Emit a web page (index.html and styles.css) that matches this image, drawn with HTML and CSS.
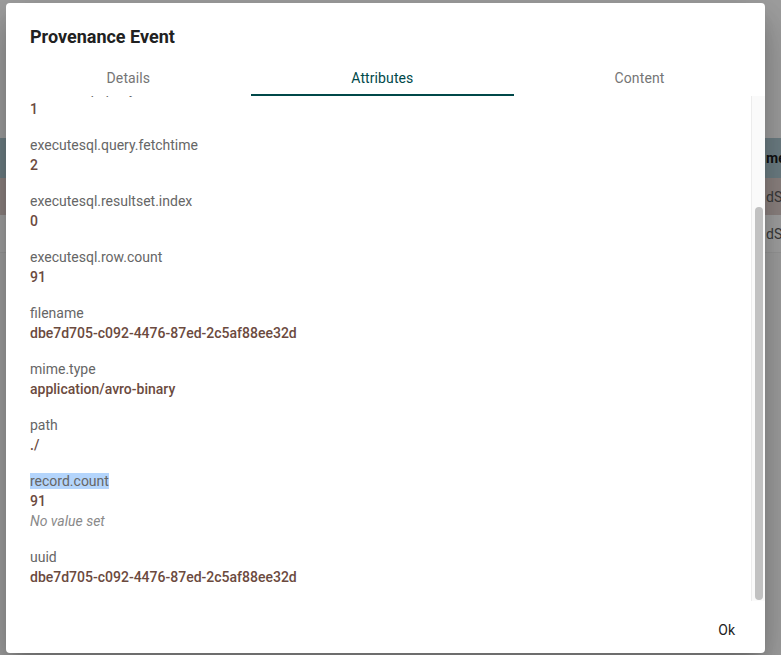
FILE: index.html
```
<!DOCTYPE html>
<html lang="en">
  <head>
    <meta charset="UTF-8" />
    <meta name="viewport" content="width=device-width, initial-scale=1.0" />
    <title>Provenance Event</title>
    <link rel="stylesheet" href="styles.css">
  </head>
  <body>
    <div class="page">
      <div class="table">
        <div class="table-row table-head"><span>mem</span></div>
        <div class="table-row table-selected"><span>dSq</span></div>
        <div class="table-row"><span>dSq</span></div>
      </div>
    </div>

    <div class="dialog">
      <h1 class="dialog-title">Provenance Event</h1>

      <div class="tabs">
        <div class="tab">Details</div>
        <div class="tab active">Attributes</div>
        <div class="tab">Content</div>
      </div>

      <div class="dialog-body">
        <div class="attr-viewport">
          <div class="attr-list">
            <div class="attr">
              <div class="attr-name">executesql.query.executiontime</div>
              <div class="attr-value">1</div>
            </div>
            <div class="attr">
              <div class="attr-name">executesql.query.fetchtime</div>
              <div class="attr-value">2</div>
            </div>
            <div class="attr">
              <div class="attr-name">executesql.resultset.index</div>
              <div class="attr-value">0</div>
            </div>
            <div class="attr">
              <div class="attr-name">executesql.row.count</div>
              <div class="attr-value">91</div>
            </div>
            <div class="attr">
              <div class="attr-name">filename</div>
              <div class="attr-value">dbe7d705-c092-4476-87ed-2c5af88ee32d</div>
            </div>
            <div class="attr">
              <div class="attr-name">mime.type</div>
              <div class="attr-value">application/avro-binary</div>
            </div>
            <div class="attr">
              <div class="attr-name">path</div>
              <div class="attr-value">./</div>
            </div>
            <div class="attr">
              <div class="attr-name"><span class="selected">record.count</span></div>
              <div class="attr-value">91</div>
              <div class="attr-empty">No value set</div>
            </div>
            <div class="attr">
              <div class="attr-name">uuid</div>
              <div class="attr-value">dbe7d705-c092-4476-87ed-2c5af88ee32d</div>
            </div>
          </div>
        </div>
        <div class="scrollbar">
          <div class="scroll-thumb"></div>
        </div>
      </div>

      <div class="dialog-actions">
        <button type="button" class="btn">Ok</button>
      </div>
    </div>
  </body>
</html>
```

FILE: styles.css
```
html,
body {
  margin: 0;
  height: 100%;
}

body {
  font-family: Roboto, "Liberation Sans", sans-serif;
  background-color: #a0a0a0;
  overflow: hidden;
}

.page {
  height: 100%;
  padding-top: 138px;
  box-sizing: border-box;
}

.table-row {
  height: 37px;
  padding-left: 766px;
  display: flex;
  align-items: center;
  font-size: 14px;
  color: #3a3a3a;
  background-color: #a3a3a3;
  border-bottom: 1px solid #999;
  white-space: nowrap;
}

.table-head {
  height: 40px;
  background-color: #6e7f85;
  color: #111;
  font-weight: bold;
  border-bottom: none;
}

.table-selected {
  background-color: #8e8482;
  border-bottom: none;
}

/* dialog sits over the dimmed page */
.dialog {
  position: absolute;
  left: 6px;
  top: 3px;
  width: 759px;
  height: 650px;
  background: white;
  border-radius: 4px;
  box-shadow: 0 11px 15px -7px rgba(0, 0, 0, 0.2),
    0 24px 38px 3px rgba(0, 0, 0, 0.14), 0 9px 46px 8px rgba(0, 0, 0, 0.12);
  display: flex;
  flex-direction: column;
}

.dialog-title {
  margin: 0;
  padding: 18px 24px 0;
  height: 32px;
  line-height: 32px;
  font-size: 18px;
  font-weight: bold;
  color: #212121;
}

.tabs {
  display: flex;
  margin-top: 7px;
  height: 36px;
}

.tab {
  flex: 1 1 auto;
  padding: 2px 24px 0;
  display: flex;
  align-items: center;
  justify-content: center;
  font-size: 14px;
  letter-spacing: 0.1px;
  color: #757575;
  border-bottom: 2px solid transparent;
}

.tab.active {
  color: #004849;
  border-bottom-color: #004849;
}

.dialog-body {
  display: flex;
  height: 505px;
}

.attr-viewport {
  flex: 1;
  overflow: hidden;
  display: flex;
  flex-direction: column;
  justify-content: flex-end;
}

.attr-list {
  padding: 0 24px 14px;
}

.attr {
  margin-bottom: 16px;
  font-size: 14px;
  line-height: 20px;
}

.attr:last-child {
  margin-bottom: 0;
}

.attr-name {
  color: #666;
}

.selected {
  background-color: #b4d5fc;
}

.attr-value {
  color: #6b4a3e;
  font-weight: 500;
}

.attr-empty {
  color: #8a8a8a;
  font-style: italic;
}

.scrollbar {
  width: 14px;
  border-left: 1px solid #ececec;
  background-color: #fafafa;
  display: flex;
  flex-direction: column;
  justify-content: flex-end;
  padding: 0 2px 1px 3px;
  box-sizing: border-box;
}

.scroll-thumb {
  height: 393px;
  background-color: #c1c1c1;
  border-radius: 5px;
}

.dialog-actions {
  flex: 1;
  display: flex;
  align-items: center;
  justify-content: flex-end;
  padding: 8px 22px 0 0;
}

.btn {
  background: none;
  border: none;
  font-family: inherit;
  font-size: 14px;
  color: #212121;
  padding: 8px 8px;
  margin-bottom: 2px;
  cursor: pointer;
}
```
